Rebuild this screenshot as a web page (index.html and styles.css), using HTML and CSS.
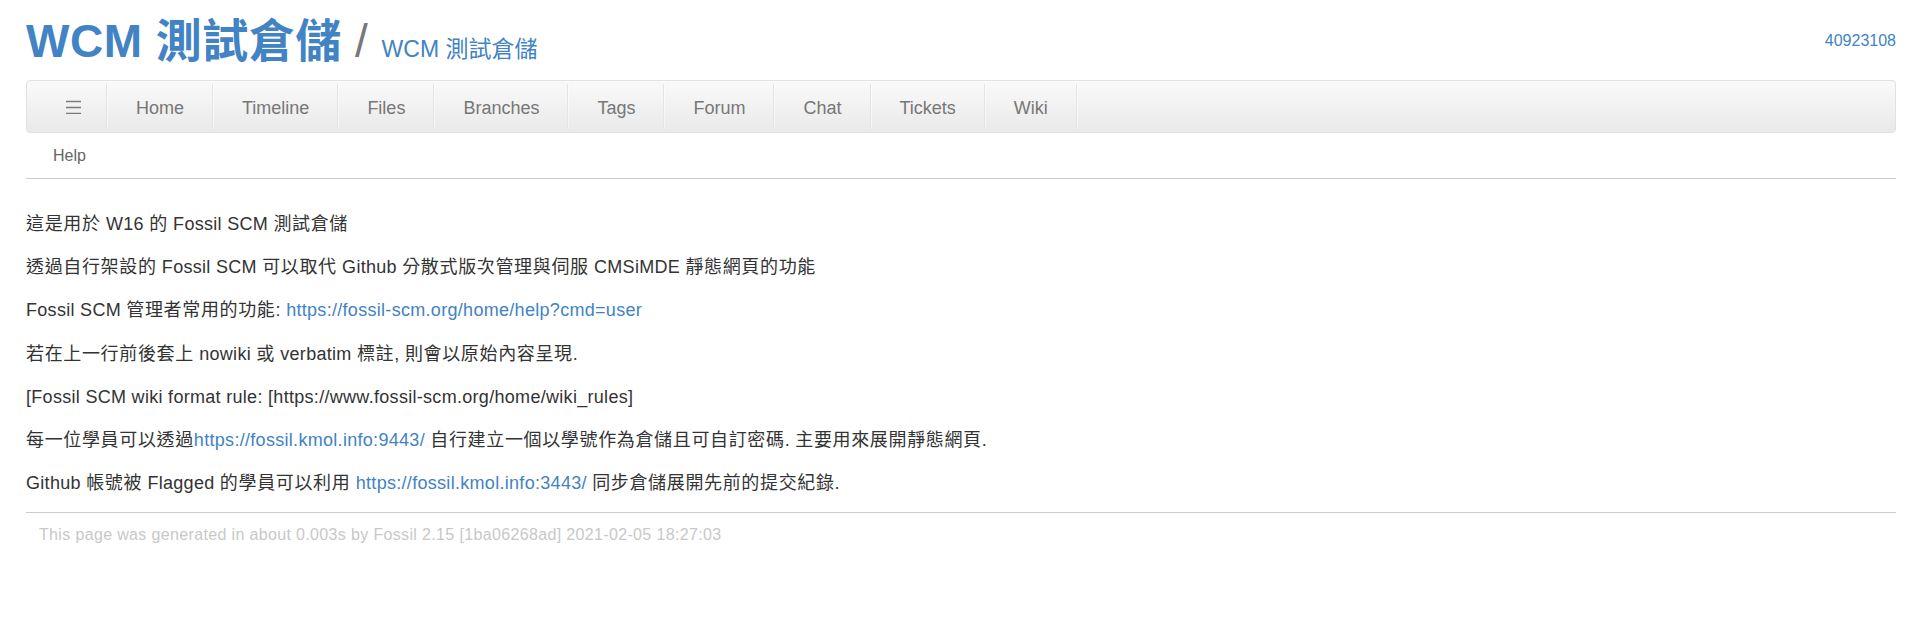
FILE: index.html
```html
<!DOCTYPE html>
<html lang="zh-Hant">
<head>
<meta charset="utf-8">
<title>WCM 測試倉儲</title>
<link rel="stylesheet" href="styles.css">
</head>
<body>
<div class="page">
  <header class="header">
    <h1 class="title">WCM 測試倉儲 <span class="sep">/</span> <small class="subtitle">WCM 測試倉儲</small></h1>
    <a class="login" href="#">40923108</a>
  </header>
  <nav class="navbar">
    <a class="nav-item nav-toggle" href="#"><svg class="burger" width="15" height="14" viewBox="0 0 15 14"><path d="M0 1.5H15M0 7.5H15M0 13.5H15" stroke="#7a7a7a" stroke-width="1.3" fill="none"/></svg></a>
    <a class="nav-item" href="#">Home</a>
    <a class="nav-item" href="#">Timeline</a>
    <a class="nav-item" href="#">Files</a>
    <a class="nav-item" href="#">Branches</a>
    <a class="nav-item" href="#">Tags</a>
    <a class="nav-item" href="#">Forum</a>
    <a class="nav-item" href="#">Chat</a>
    <a class="nav-item" href="#">Tickets</a>
    <a class="nav-item" href="#">Wiki</a>
  </nav>
  <div class="submenu"><a class="sub-item" href="#">Help</a></div>
  <main class="content">
    <p><span class="han">這是用於</span> W16 <span class="han">的</span> Fossil SCM <span class="han">測試倉儲</span></p>
    <p><span class="han">透過自行架設的</span> Fossil SCM <span class="han">可以取代</span> Github <span class="han">分散式版次管理與伺服</span> CMSiMDE <span class="han">靜態網頁的功能</span></p>
    <p>Fossil SCM <span class="han">管理者常用的功能</span>: <a href="#">https://fossil-scm.org/home/help?cmd=user</a></p>
    <p><span class="han">若在上一行前後套上</span> nowiki <span class="han">或</span> verbatim <span class="han">標註</span>, <span class="han">則會以原始內容呈現</span>.</p>
    <p>[Fossil SCM wiki format rule: [https://www.fossil-scm.org/home/wiki_rules]</p>
    <p><span class="han">每一位學員可以透過</span><a href="#">https://fossil.kmol.info:9443/</a> <span class="han">自行建立一個以學號作為倉儲且可自訂密碼</span>. <span class="han">主要用來展開靜態網頁</span>.</p>
    <p>Github <span class="han">帳號被</span> Flagged <span class="han">的學員可以利用</span> <a href="#">https://fossil.kmol.info:3443/</a> <span class="han">同步倉儲展開先前的提交紀錄</span>.</p>
  </main>
  <footer class="footer">This page was generated in about 0.003s by Fossil 2.15 [1ba06268ad] 2021-02-05 18:27:03</footer>
</div>
</body>
</html>
```
FILE: styles.css
```css
html, body {
  margin: 0;
  padding: 0;
  background: #fff;
}
body {
  font-family: "Liberation Sans", Arial, "Noto Sans CJK TC", sans-serif;
  color: #333;
  font-size: 18px;
}
a {
  text-decoration: none;
  color: #4183c4;
}
.page {
  padding: 0 26px;
}
.header {
  display: flex;
  justify-content: space-between;
  align-items: flex-start;
  padding-top: 16px;
}
.title {
  margin: 0;
  font-size: 46px;
  line-height: 50px;
  font-weight: bold;
  letter-spacing: 0.5px;
  color: #4183c4;
  white-space: nowrap;
}
.sep {
  font-weight: normal;
  color: #777;
}
.subtitle {
  font-size: 23px;
  line-height: 20px;
  font-weight: normal;
  letter-spacing: 0;
  color: #4183c4;
}
.login {
  font-size: 16px;
  line-height: 20px;
  margin-top: 15px;
}
.navbar {
  margin-top: 14px;
  height: 53px;
  box-sizing: border-box;
  border: 1px solid #e1e1e1;
  border-radius: 4px;
  background: linear-gradient(to bottom, #fafafa 0%, #e9e9e9 100%);
  display: flex;
  align-items: center;
}
.nav-item {
  display: block;
  height: 45px;
  box-sizing: border-box;
  padding: 3px 28px 0 29px;
  line-height: 42px;
  font-size: 18px;
  color: #777;
  border-right: 1px solid #e4e4e4;
  box-shadow: 1px 0 0 rgba(255,255,255,0.5);
}
.nav-toggle {
  padding: 0 25px 0 39px;
  display: flex;
  align-items: center;
}
.burger {
  display: block;
  margin-top: 1px;
}
.submenu {
  padding: 12px 27px;
  border-bottom: 1px solid #ccc;
}
.sub-item {
  display: inline-block;
  font-size: 16px;
  line-height: 20px;
  color: #666;
}
.content {
  padding-top: 15px;
}
.content p {
  margin: 18px 0;
  line-height: 1.4;
  letter-spacing: 0.3px;
}
.content p:last-child {
  margin-bottom: 16px;
}
.han {
  letter-spacing: 0.65px;
}
.footer {
  border-top: 1px solid #ccc;
  padding: 12px 13px;
  font-size: 16px;
  line-height: 20px;
  letter-spacing: 0.35px;
  color: #c8c8c8;
}
```
